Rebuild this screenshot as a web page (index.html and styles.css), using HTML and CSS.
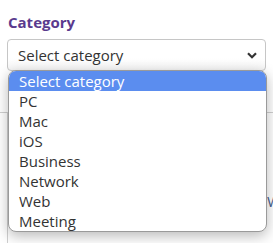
FILE: index.html
```html
<!DOCTYPE html>
<html>
<head>
<meta charset="utf-8">
<link rel="stylesheet" href="styles.css">
</head>
<body>
<div class="page">
  <div class="field">
    <label class="label">Category</label>
    <div class="select">
      <span class="select-text">Select category</span>
      <svg class="chev" width="10" height="7" viewBox="0 0 10 7"><path d="M1 1.2 L5 5.2 L9 1.2" fill="none" stroke="#333" stroke-width="2.2"/></svg>
    </div>
  </div>
  <div class="below">
    <div class="box"></div>
    <span class="peek">W</span>
  </div>
  <ul class="menu">
    <li class="opt active">Select category</li>
    <li class="opt">PC</li>
    <li class="opt">Mac</li>
    <li class="opt">iOS</li>
    <li class="opt">Business</li>
    <li class="opt">Network</li>
    <li class="opt">Web</li>
    <li class="opt">Meeting</li>
  </ul>
</div>
</body>
</html>
```
FILE: styles.css
```css
html, body { margin: 0; padding: 0; background: #fff; }
body { font-family: "Open Sans", "Noto Sans", sans-serif; width: 273px; height: 243px; overflow: hidden; }
.page { position: relative; height: 243px; }
.field { padding: 12px 7px 0 7px; }
.label { display: block; font-weight: 700; font-size: 15px; color: #5a3a8e; line-height: 20px; padding-left: 1px; }
.select {
  margin-top: 7px;
  height: 30px;
  border: 1px solid #c6c6c6;
  border-radius: 4px;
  display: flex; align-items: center; justify-content: space-between;
  padding: 0 8px 0 10px;
  background: linear-gradient(#fff 60%, #f6f6f6);
}
.select-text { font-size: 15px; color: #333; }
.chev { display: block; margin-top: 1px; }
.below { margin-top: 41px; position: relative; height: 140px; border-top: 1px solid #d0d0d0; }
.box { margin-left: 7px; height: 130px; border-left: 1px solid #d0d0d0; }
.peek { position: absolute; left: 267px; top: 78px; font-size: 15px; color: #4a6390; }
.menu {
  position: absolute; left: 8px; top: 70px; width: 257px;
  margin: 0; padding: 0; list-style: none;
  background: #fff; border: 1px solid #9a9a9a; border-radius: 8px; overflow: hidden;
  box-shadow: 0 4px 14px rgba(0,0,0,0.28);
}
.opt { height: 20px; line-height: 20px; padding-left: 10px; font-size: 15px; color: #333; }
.opt.active { background: #5b8def; color: #fff; }
```
